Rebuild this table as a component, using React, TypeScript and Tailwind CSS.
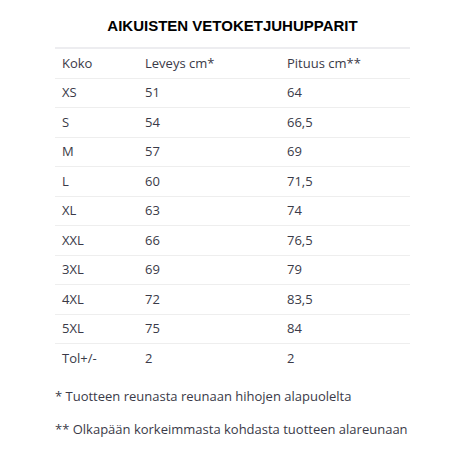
import React from "react";

const rows: [string, string, string][] = [
  ["XS", "51", "64"],
  ["S", "54", "66,5"],
  ["M", "57", "69"],
  ["L", "60", "71,5"],
  ["XL", "63", "74"],
  ["XXL", "66", "76,5"],
  ["3XL", "69", "79"],
  ["4XL", "72", "83,5"],
  ["5XL", "75", "84"],
  ["Tol+/-", "2", "2"],
];

export default function App() {
  return (
    <div className="w-[465px] h-[465px] bg-white flex flex-col items-center pt-[16px]">
      <h1 className="text-[15px] leading-[20px] font-bold text-black" style={{ fontFamily: '"Liberation Sans", Arial, sans-serif' }}>
        AIKUISTEN VETOKETJUHUPPARIT
      </h1>
      <div className="w-[355px] mt-[11px] text-[#3a3a48] text-[13px]" style={{ fontFamily: '"Open Sans", sans-serif' }}>
        <div className="border-t-2 border-[#ededf0]">
          <div className="flex h-[29.5px] items-center border-b border-[#eeeeee]">
            <div className="w-[83px] pl-[7px]">Koko</div>
            <div className="w-[142px] pl-[7px]">Leveys cm*</div>
            <div className="flex-1 pl-[7px]">Pituus cm**</div>
          </div>
          {rows.map((r, i) => (
            <div
              key={r[0]}
              className={`flex h-[29.5px] items-center ${i < rows.length - 1 ? "border-b border-[#eeeeee]" : ""}`}
            >
              <div className="w-[83px] pl-[7px]">{r[0]}</div>
              <div className="w-[142px] pl-[7px]">{r[1]}</div>
              <div className="flex-1 pl-[7px]">{r[2]}</div>
            </div>
          ))}
        </div>
        <p className="mt-[13px] leading-[18px]">* Tuotteen reunasta reunaan hihojen alapuolelta</p>
        <p className="mt-[15px] leading-[18px]">** Olkapään korkeimmasta kohdasta tuotteen alareunaan</p>
      </div>
    </div>
  );
}
